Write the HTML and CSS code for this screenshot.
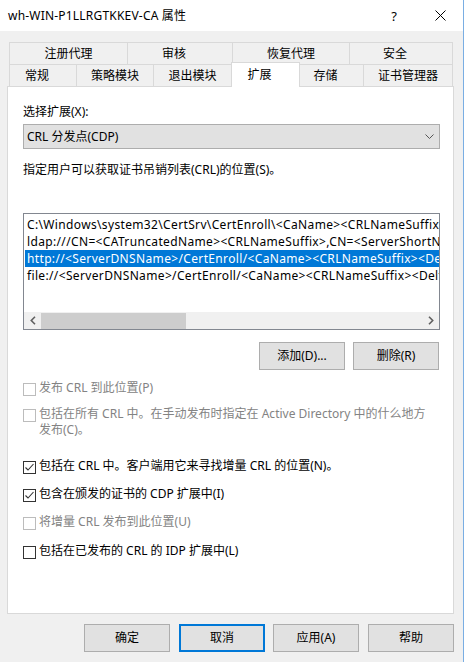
FILE: index.html
```html
<!DOCTYPE html>
<html lang="zh-CN">
<head>
<meta charset="utf-8">
<title>wh-WIN-P1LLRGTKKEV-CA 属性</title>
<link rel="stylesheet" href="styles.css">
</head>
<body>
<div class="window">
  <div class="titlebar">
    <span class="title">wh-WIN-P1LLRGTKKEV-CA 属性</span>
    <span class="cap cap-help">?</span>
    <span class="cap cap-close">
      <svg width="11" height="11" viewBox="0 0 11 11"><path d="M0.5 0.5 L10.5 10.5 M10.5 0.5 L0.5 10.5" stroke="#000" stroke-width="1" fill="none"/></svg>
    </span>
  </div>
  <div class="client">
    <div class="tabs">
      <div class="tabrow">
        <div class="tab w118">注册代理</div>
        <div class="tab w105 short">审核</div>
        <div class="tab w117">恢复代理</div>
        <div class="tab w104 short last">安全</div>
      </div>
      <div class="tabrow">
        <div class="tab w67 short">常规</div>
        <div class="tab w77">策略模块</div>
        <div class="tab w78">退出模块</div>
        <div class="tab w69 short selected">扩展</div>
        <div class="tab w63 short noleft">存储</div>
        <div class="tab w90 last">证书管理器</div>
      </div>
    </div>
    <div class="panel">
      <div class="label">选择扩展(X):</div>
      <div class="combo">
        <span class="combo-text">CRL 分发点(CDP)</span>
        <svg class="chev" width="9" height="6" viewBox="0 0 9 6"><polyline points="0.5,0.5 4.5,4.5 8.5,0.5" fill="none" stroke="#555" stroke-width="1"/></svg>
      </div>
      <div class="desc">指定用户可以获取证书吊销列表(CRL)的位置(S)。</div>
      <div class="listbox">
        <div class="list-items">
          <div class="item">C:\Windows\system32\CertSrv\CertEnroll\&lt;CaName&gt;&lt;CRLNameSuffix&gt;&lt;DeltaCRLAllowed&gt;.crl</div>
          <div class="item">ldap:///CN=&lt;CATruncatedName&gt;&lt;CRLNameSuffix&gt;,CN=&lt;ServerShortName&gt;,CN=CDP,CN=Public Key Services,CN=Services,&lt;ConfigurationContainer&gt;&lt;CDPObjectClass&gt;</div>
          <div class="item sel">http://&lt;ServerDNSName&gt;/CertEnroll/&lt;CaName&gt;&lt;CRLNameSuffix&gt;&lt;DeltaCRLAllowed&gt;.crl</div>
          <div class="item">file://&lt;ServerDNSName&gt;/CertEnroll/&lt;CaName&gt;&lt;CRLNameSuffix&gt;&lt;DeltaCRLAllowed&gt;.crl</div>
        </div>
        <div class="hscroll">
          <span class="arrow"><svg width="6" height="9" viewBox="0 0 6 9"><polyline points="5,0.8 1.3,4.5 5,8.2" fill="none" stroke="#606060" stroke-width="1.6"/></svg></span>
          <span class="track"><span class="thumb"></span></span>
          <span class="arrow"><svg width="6" height="9" viewBox="0 0 6 9"><polyline points="1,0.8 4.7,4.5 1,8.2" fill="none" stroke="#606060" stroke-width="1.6"/></svg></span>
        </div>
      </div>
      <div class="btnrow">
        <span class="btn">添加(D)...</span>
        <span class="btn">删除(R)</span>
      </div>
      <div class="cb disabled r1"><span class="box"></span><span class="cbtext">发布 CRL 到此位置(P)</span></div>
      <div class="cb disabled r2"><span class="box"></span><span class="cbtext">包括在所有 CRL 中。在手动发布时指定在 Active Directory 中的什么地方<br>发布(C)。</span></div>
      <div class="cb r3"><span class="box"><svg width="11" height="11" viewBox="0 0 11 11"><polyline points="1.5,5.5 4,8 9.5,2" fill="none" stroke="#333" stroke-width="1.1"/></svg></span><span class="cbtext">包括在 CRL 中。客户端用它来寻找增量 CRL 的位置(N)。</span></div>
      <div class="cb r4"><span class="box"><svg width="11" height="11" viewBox="0 0 11 11"><polyline points="1.5,5.5 4,8 9.5,2" fill="none" stroke="#333" stroke-width="1.1"/></svg></span><span class="cbtext">包含在颁发的证书的 CDP 扩展中(I)</span></div>
      <div class="cb disabled r5"><span class="box"></span><span class="cbtext">将增量 CRL 发布到此位置(U)</span></div>
      <div class="cb r6"><span class="box"></span><span class="cbtext">包括在已发布的 CRL 的 IDP 扩展中(L)</span></div>
    </div>
    <div class="dlgbtns">
      <span class="btn">确定</span>
      <span class="btn focus">取消</span>
      <span class="btn apply">应用(A)</span>
      <span class="btn">帮助</span>
    </div>
  </div>
</div>
</body>
</html>
```
FILE: styles.css
```css
* { box-sizing: border-box; }
html, body { margin: 0; padding: 0; }
body {
  width: 464px;
  height: 662px;
  overflow: hidden;
  background: #f0f0f0;
  font-family: "Noto Sans", "Noto Sans CJK SC", sans-serif;
  font-size: 12px;
  line-height: 16px;
  color: #000;
}
.window {
  width: 464px;
  height: 662px;
  border-right: 1px solid #7aaee3;
  display: flex;
  flex-direction: column;
}
.titlebar {
  height: 31px;
  flex: none;
  background: #fff;
  display: flex;
  align-items: center;
}
.title { flex: 1; padding-left: 8px; letter-spacing: 0.2px; }
.cap {
  width: 46px;
  height: 31px;
  display: flex;
  align-items: center;
  justify-content: center;
}
.cap-help { font-size: 13px; }
.client {
  flex: 1;
  padding: 11px 9px 0 7px;
  display: flex;
  flex-direction: column;
}
.tabs { margin-left: 2px; }
.tabrow { display: flex; height: 22px; align-items: flex-start; }
.tab {
  height: 22px;
  background: #f0f0f0;
  border-top: 1px solid #d9d9d9;
  border-left: 1px solid #d9d9d9;
  display: flex;
  align-items: center;
  justify-content: center;
  white-space: nowrap;
}
.tab.last { border-right: 1px solid #d9d9d9; }
.tab.noleft { border-left: none; }
.tab.short { padding-right: 12px; }
.tab.selected {
  background: #fff;
  border-right: 1px solid #d9d9d9;
  height: 25px;
  margin-top: -2px;
  margin-bottom: -1px;
  padding-bottom: 1px;
  position: relative;
  z-index: 1;
}
.w118 { width: 118px; } .w105 { width: 105px; } .w117 { width: 117px; } .w104 { width: 104px; }
.w67 { width: 67px; } .w77 { width: 77px; } .w78 { width: 78px; } .w69 { width: 69px; }
.w63 { width: 63px; } .w90 { width: 90px; }

.panel {
  width: 447px;
  height: 528px;
  background: #fff;
  border: 1px solid #d9d9d9;
  padding: 0 13px 0 15px;
}
.label { margin-top: 17px; }
.combo {
  margin-top: 4px;
  height: 25px;
  background: #e1e1e1;
  border: 1px solid #adadad;
  display: flex;
  align-items: center;
  padding: 0 5px 0 3px;
}
.combo-text { flex: 1; }
.desc { margin-top: 13px; }
.listbox {
  margin-top: 35px;
  height: 117px;
  border: 1px solid #828790;
  display: flex;
  flex-direction: column;
}
.list-items {
  flex: 1;
  overflow: hidden;
  padding: 2px 0 0 1px;
}
.item {
  height: 17px;
  line-height: 17px;
  padding-left: 2px;
  white-space: nowrap;
  overflow: hidden;
  letter-spacing: 0.35px;
}
.item.sel { background: #0078d7; color: #fff; }
.hscroll {
  height: 17px;
  flex: none;
  background: #f0f0f0;
  display: flex;
}
.arrow {
  width: 17px;
  display: flex;
  align-items: center;
  justify-content: center;
  flex: none;
}
.track { flex: 1; display: flex; align-items: stretch; padding: 1px 0 0; }
.thumb { width: 145px; background: #cdcdcd; }
.btnrow {
  margin-top: 12px;
  display: flex;
  justify-content: flex-end;
  gap: 8px;
  padding-right: 1px;
}
.btn {
  width: 86px;
  height: 28px;
  background: #e1e1e1;
  border: 1px solid #adadad;
  display: flex;
  align-items: center;
  justify-content: center;
  white-space: nowrap;
}
.cb { display: flex; align-items: flex-start; }
.box {
  width: 13px;
  height: 13px;
  margin-top: 3px;
  margin-right: 3px;
  flex: none;
  background: #fff;
  border: 1px solid #333;
  display: flex;
  align-items: center;
  justify-content: center;
}
.cb.disabled { color: #838383; }
.cb.disabled .box { border-color: #bcbcbc; }
.r1 { margin-top: 10px; }
.r2 { margin-top: 10px; }
.r3 { margin-top: 20px; }
.r4 { margin-top: 12px; }
.r5 { margin-top: 12px; }
.r6 { margin-top: 13px; }
.dlgbtns {
  margin-top: 10px;
  display: flex;
  justify-content: flex-end;
  gap: 9px;
}
.dlgbtns .apply { margin-left: -1px; }
.btn.focus { border: 2px solid #0078d7; }
```
